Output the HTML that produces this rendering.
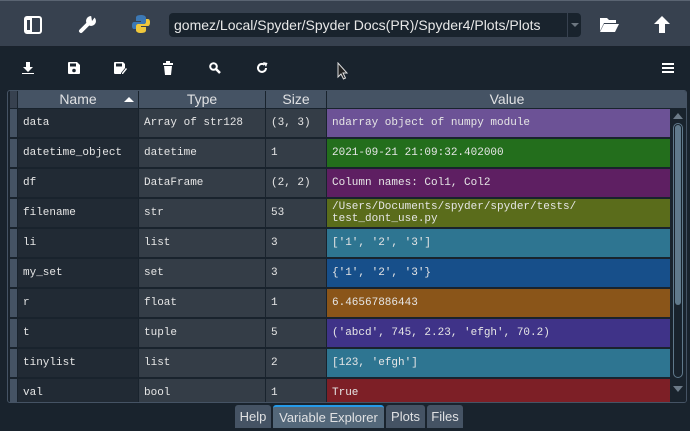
<!DOCTYPE html>
<html><head><style>
*{margin:0;padding:0;box-sizing:border-box}
body{width:690px;height:431px;overflow:hidden;background:#19232d;font-family:"Liberation Sans",sans-serif;color:#e0e1e3;position:relative}
.top{position:absolute;left:0;top:0;width:690px;height:47px;background:#37414f;border-top:1px solid #5a6472;border-bottom:1px solid #1a222c}
.path{position:absolute;left:169px;top:12px;width:412px;height:24px;background:#19232d;border-radius:4px;font-size:14px;line-height:24px;padding-left:5px;color:#e8e8e8;overflow:hidden;white-space:nowrap}
.path .dd{position:absolute;right:0;top:0;width:14px;height:24px;border-left:1px solid #37414f}
.tbl{position:absolute;left:7px;top:90px;width:680px;height:313px;border:1px solid #455364;border-radius:3px;overflow:hidden;background:#19232d}
.row{position:absolute;left:0;height:28px;width:680px}
.c{position:absolute;top:0;height:28px;font-family:"Liberation Mono",monospace;font-size:11px;line-height:28px;padding-left:5px;white-space:nowrap;color:#e6e6e6}
.g{left:2px;width:7px;background:#455364}
.n{left:10px;width:120px;background:#212a34}
.t{left:131px;width:126px;background:#343d47}
.s{left:258px;width:60px;background:#343d47}
.v{left:319px;width:343px}
.hd{position:absolute;top:0;height:17px;background:#455364;font-size:14px;line-height:17px;text-align:center;color:#e0e1e3}
.tab{position:absolute;top:405px;height:23px;background:#455364;border-radius:3px 3px 0 0;font-size:13px;line-height:24px;text-align:center;color:#e0e1e3}
svg{position:absolute}
</style></head><body>
<div class="top">
<svg style="left:24px;top:15px" width="18" height="18" viewBox="0 0 18 18"><rect x="1" y="1" width="16" height="16" rx="2" fill="none" stroke="#fff" stroke-width="2"/><rect x="1" y="1" width="7" height="16" fill="#fff"/><rect x="3" y="4" width="3" height="10" fill="#37414f"/></svg>
<svg style="left:78px;top:13px" width="20" height="20" viewBox="0 0 20 20"><path d="M3 17 L11 9" stroke="#fff" stroke-width="4" stroke-linecap="round"/><circle cx="13" cy="7" r="5" fill="#fff"/><path d="M13 1 L17 3 L14 7 Z" fill="#37414f"/></svg>
<svg style="left:131px;top:13px" width="20" height="20" viewBox="0 0 20 20"><path d="M10 1 C5 1 5 3 5 4 V7 H10 V8 H3 C1 8 1 11 1 12 C1 14 2 15 3 15 H5 V12 C5 11 6 10 7 10 H13 C14 10 15 9 15 8 V4 C15 2 13 1 10 1Z" fill="#3c78b4"/><path d="M10 19 C15 19 15 17 15 16 V13 H10 V12 H17 C19 12 19 9 19 8 C19 6 18 5 17 5 H15 V8 C15 9 14 10 13 10 H7 C6 10 5 11 5 12 V16 C5 18 7 19 10 19Z" fill="#f0c83c"/></svg>
<div class="path">gomez/Local/Spyder/Spyder Docs(PR)/Spyder4/Plots/Plots<div class="dd"><svg style="left:3px;top:10px" width="8" height="4"><path d="M0 0H8L4 4Z" fill="#6c7680"/></svg></div></div>
<svg style="left:599px;top:15px" width="21" height="17" viewBox="0 0 21 17"><path d="M1 2 H8 L10 4 H17 V7 H5 L1 15Z" fill="#fff"/><path d="M5 8 H20 L16 16 H1Z" fill="#fff"/></svg>
<svg style="left:654px;top:15px" width="16" height="17" viewBox="0 0 16 17"><path d="M8 0 L16 8 H11 V17 H5 V8 H0Z" fill="#fff"/></svg>
</div>
<svg style="left:22px;top:62px" width="12" height="12" viewBox="0 0 12 12"><path d="M4 0H8V5H11L6 10L1 5H4Z M0 11H12V12H0Z" fill="#fff"/></svg>
<svg style="left:68px;top:62px" width="12" height="12" viewBox="0 0 12 12"><path d="M0 1 Q0 0 1 0 H9 L12 3 V11 Q12 12 11 12 H1 Q0 12 0 11Z" fill="#fff"/><rect x="2" y="1.5" width="6" height="3" fill="#19232d"/><circle cx="6" cy="8.5" r="1.8" fill="#19232d"/></svg>
<svg style="left:114px;top:62px" width="13" height="12" viewBox="0 0 13 12"><path d="M0 1 Q0 0 1 0 H9 L11 2 V6 L7 11 V12 H1 Q0 12 0 11Z" fill="#fff"/><rect x="2" y="1.5" width="6" height="3" fill="#19232d"/><path d="M8 11 L12 6 L13 7 L9 12 H8Z" fill="#fff"/></svg>
<svg style="left:163px;top:61px" width="10" height="14" viewBox="0 0 10 14"><rect x="0" y="2" width="10" height="2" fill="#fff"/><rect x="3" y="0" width="4" height="2" fill="#fff"/><path d="M1 5H9L8 14H2Z" fill="#fff"/></svg>
<svg style="left:209px;top:62px" width="12" height="12" viewBox="0 0 12 12"><circle cx="4.5" cy="4.5" r="3.3" fill="none" stroke="#fff" stroke-width="2"/><path d="M7 7 L11 11" stroke="#fff" stroke-width="2.5"/></svg>
<svg style="left:256px;top:62px" width="12" height="12" viewBox="0 0 12 12"><path d="M10 6 A4 4 0 1 1 8.5 2.8" fill="none" stroke="#fff" stroke-width="2"/><path d="M7 0 L11.5 1 L10 5Z" fill="#fff"/></svg>
<svg style="left:337px;top:62px" width="12" height="18" viewBox="0 0 12 18"><path d="M1 1 V15 L4 12 L6.5 17 L8.5 16 L6 11 H10Z" fill="#222" stroke="#ddd" stroke-width="1"/></svg>
<svg style="left:662px;top:63px" width="12" height="10"><rect y="0" width="12" height="2" fill="#fff"/><rect y="4" width="12" height="2" fill="#fff"/><rect y="8" width="12" height="2" fill="#fff"/></svg>

<div class="tbl">
<div class="hd" style="left:2px;width:7px;background:#37414f"></div>
<div class="hd" style="left:10px;width:120px">Name<svg style="left:106px;top:6px" width="10" height="5"><path d="M0 5H10L5 0Z" fill="#fff"/></svg></div>
<div class="hd" style="left:131px;width:126px">Type</div>
<div class="hd" style="left:258px;width:60px">Size</div>
<div class="hd" style="left:319px;width:360px">Value</div>

<div class="row" style="top:18px"><div class="c g"></div><div class="c n">data</div><div class="c t">Array of str128</div><div class="c s">(3, 3)</div><div class="c v" style="background:#6c5296">ndarray object of numpy module</div></div>
<div class="row" style="top:48px"><div class="c g"></div><div class="c n">datetime_object</div><div class="c t">datetime</div><div class="c s">1</div><div class="c v" style="background:#236e1c">2021-09-21 21:09:32.402000</div></div>
<div class="row" style="top:78px"><div class="c g"></div><div class="c n">df</div><div class="c t">DataFrame</div><div class="c s">(2, 2)</div><div class="c v" style="background:#5e1f62">Column names: Col1, Col2</div></div>
<div class="row" style="top:108px"><div class="c g"></div><div class="c n">filename</div><div class="c t">str</div><div class="c s">53</div><div class="c v" style="background:#5a6c1b;line-height:12px;padding-top:2px">/Users/Documents/spyder/spyder/tests/<br>test_dont_use.py</div></div>
<div class="row" style="top:138px"><div class="c g"></div><div class="c n">li</div><div class="c t">list</div><div class="c s">3</div><div class="c v" style="background:#2e7591">['1', '2', '3']</div></div>
<div class="row" style="top:168px"><div class="c g"></div><div class="c n">my_set</div><div class="c t">set</div><div class="c s">3</div><div class="c v" style="background:#174f8a">{'1', '2', '3'}</div></div>
<div class="row" style="top:198px"><div class="c g"></div><div class="c n">r</div><div class="c t">float</div><div class="c s">1</div><div class="c v" style="background:#8a5519">6.46567886443</div></div>
<div class="row" style="top:228px"><div class="c g"></div><div class="c n">t</div><div class="c t">tuple</div><div class="c s">5</div><div class="c v" style="background:#3f3388">('abcd', 745, 2.23, 'efgh', 70.2)</div></div>
<div class="row" style="top:258px"><div class="c g"></div><div class="c n">tinylist</div><div class="c t">list</div><div class="c s">2</div><div class="c v" style="background:#2e7591">[123, 'efgh']</div></div>
<div class="row" style="top:288px"><div class="c g"></div><div class="c n">val</div><div class="c t">bool</div><div class="c s">1</div><div class="c v" style="background:#7d1f26">True</div></div>

<div style="position:absolute;left:662px;top:18px;width:18px;height:294px;background:#19232d"></div>
<svg style="left:665px;top:22px" width="10" height="6"><path d="M0 6H10L5 0Z" fill="#6c7a88"/></svg>
<div style="position:absolute;left:665px;top:32px;width:10px;height:255px;border:1px solid #60798b;border-radius:5px;background:#19232d"><div style="margin:1px;height:180px;background:#60798b;border-radius:4px"></div></div>
<svg style="left:665px;top:295px" width="10" height="6"><path d="M0 0H10L5 6Z" fill="#6c7a88"/></svg>
</div>

<div class="tab" style="left:235px;width:36px">Help</div>
<div class="tab" style="left:273px;width:111px;background:#54687a;border-top:2px solid #259ae9;line-height:21px">Variable Explorer</div>
<div class="tab" style="left:386px;width:39px">Plots</div>
<div class="tab" style="left:427px;width:36px">Files</div>
</body></html>
